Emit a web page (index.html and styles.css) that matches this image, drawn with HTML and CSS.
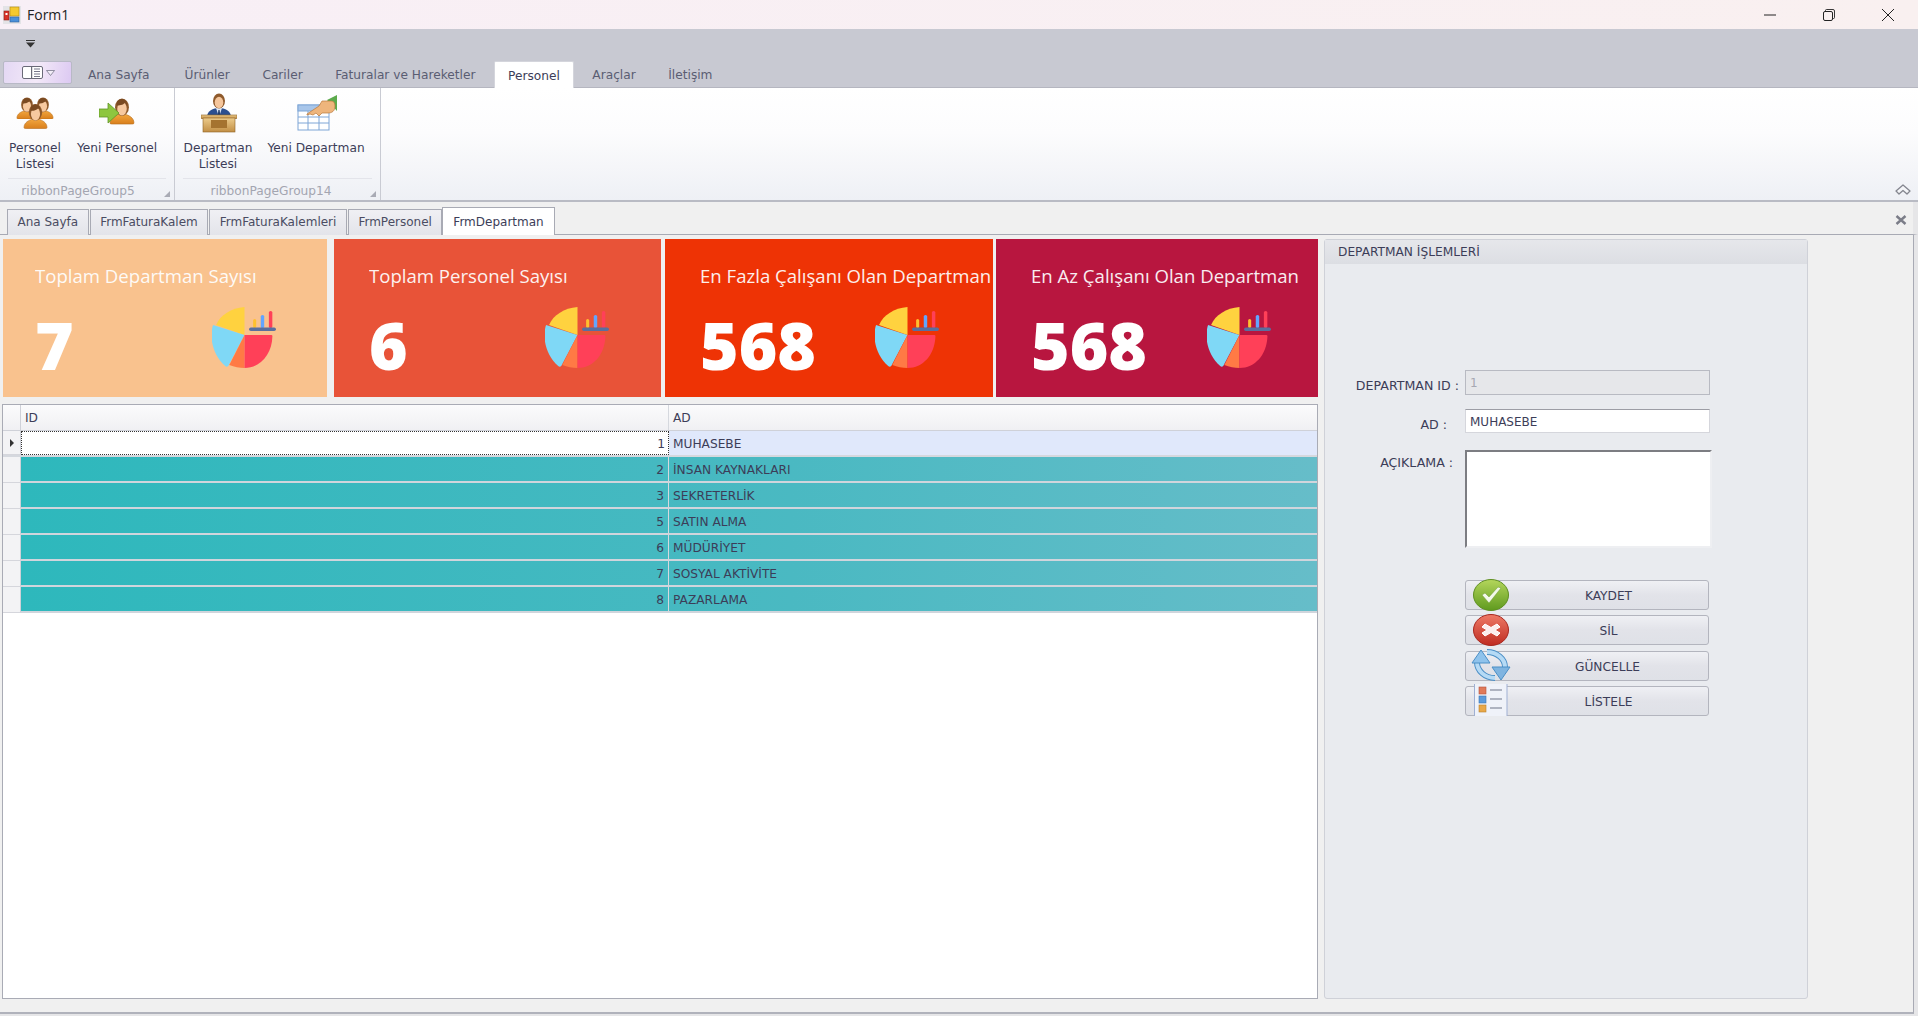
FILE: index.html
```html
<!DOCTYPE html>
<html lang="tr">
<head>
    <meta charset="UTF-8">
    <title>Form1</title>
    <link rel="stylesheet" href="styles.css">
</head>
<body>

<svg class="icon-defs" aria-hidden="true">
    <defs>
        <linearGradient id="shirt" x1="0" y1="0" x2="0" y2="1">
            <stop offset="0" stop-color="#f2a63f"/>
            <stop offset="1" stop-color="#d97f1c"/>
        </linearGradient>
        <linearGradient id="green-ball" x1="0" y1="0" x2="0" y2="1">
            <stop offset="0" stop-color="#b4d65c"/>
            <stop offset="1" stop-color="#5f9a1e"/>
        </linearGradient>
        <linearGradient id="red-ball" x1="0" y1="0" x2="0" y2="1">
            <stop offset="0" stop-color="#ee7a66"/>
            <stop offset="1" stop-color="#bf2c22"/>
        </linearGradient>
        <linearGradient id="wood" x1="0" y1="0" x2="0" y2="1">
            <stop offset="0" stop-color="#eccb8b"/>
            <stop offset="1" stop-color="#c28f45"/>
        </linearGradient>
        <symbol id="person" viewBox="0 0 24 24">
            <path d="M1 23c0-5 5-7 8-8h6c3 1 8 3 8 8 0 1-1 1-2 1H3c-1 0-2 0-2-1z" fill="url(#shirt)" stroke="#b86f1e" stroke-width=".6"/>
            <ellipse cx="12" cy="8.5" rx="6.4" ry="8" fill="#8f5a2c"/>
            <ellipse cx="12" cy="10" rx="4.4" ry="6.2" fill="#f7c9a0"/>
            <path d="M7 7c2 0 6 0 8-3l2 4c0-4-2-7-5-7S7 3 7 7z" fill="#7a4a22"/>
        </symbol>
        <symbol id="pie" viewBox="13 11 64 62" preserveAspectRatio="none">
            <path d="M45 40V12C32 13 21 20 17 30Z" fill="#ffd23f"/>
            <path d="M45 40L14 30C10 43 14 60 26 71c1 1 2 1 3 0Z" fill="#7fd8f6"/>
            <path d="M45 40L30 70c5 2 10 3 15 3Z" fill="#ff7a45"/>
            <path d="M45 40V73C60 73 72 60 72.5 41c0-1-1-1-1-1Z" fill="#ff4058"/>
            <rect x="53.5" y="24" width="3" height="9" rx="1.5" fill="#ffc02e"/>
            <rect x="61" y="20" width="3.4" height="13" rx="1.6" fill="#62a5ff"/>
            <rect x="69" y="16" width="3.4" height="17" rx="1.6" fill="#ff4058"/>
            <rect x="49.5" y="32.4" width="26.5" height="3.6" rx="1.8" fill="#5a6f9e"/>
        </symbol>
    </defs>
</svg>

<header class="titlebar">
    <svg class="app-icon" viewBox="0 0 18 18">
        <rect x="0" y="0" width="18" height="18" fill="#e3e3e6"/>
        <rect x="7" y="1" width="9" height="9" fill="#f4c92e" stroke="#b98f14" stroke-width=".7"/>
        <rect x="1" y="5" width="5" height="9" fill="#d8332b" stroke="#8c1f1a" stroke-width=".6"/>
        <rect x="2.5" y="7" width="2" height="2" fill="#fff"/>
        <rect x="7" y="11" width="9" height="5" fill="#4a90d9" stroke="#2c5f9c" stroke-width=".6"/>
    </svg>
    <span class="titlebar-text">Form1</span>
    <div class="window-buttons">
        <svg viewBox="0 0 12 12"><path d="M0 6h12" stroke="#222" stroke-width="1" fill="none"/></svg>
        <svg viewBox="0 0 12 12"><path d="M2.5 2.5V1.5q0-1 1-1h6.5q1.500 0 1.500 1.500v6.500q0 1-1 1H9.500" stroke="#222" stroke-width=".9" fill="none"/><rect x=".5" y="2.500" width="9" height="9" rx="1.500" stroke="#222" stroke-width="1" fill="none"/></svg>
        <svg viewBox="0 0 12 12"><path d="M0 0l12 12M12 0L0 12" stroke="#222" stroke-width="1" fill="none"/></svg>
    </div>
</header>

<section class="ribbon">
    <div class="quick-access">
        <svg viewBox="0 0 9 8" class="quick-arrow"><path d="M0 0h9v1H0zM0 2.500h9L4.500 7.500z" fill="#333"/></svg>
    </div>
    <nav class="ribbon-tabs">
        <div class="app-button">
            <svg viewBox="0 0 21 13" class="app-button-icon">
                <rect x=".5" y=".5" width="20" height="12" rx="1.500" fill="#fff" stroke="#6a6a78"/>
                <rect x="9" y="1" width="1.200" height="11" fill="#6a6a78"/>
                <path d="M12 3h6M12 5.500h6M12 8h6M12 10.500h6" stroke="#77778a"/>
            </svg>
            <svg viewBox="0 0 9 6" class="app-button-arrow"><path d="M.5.500h8L4.500 5.500z" fill="#f3edf8" stroke="#77778a" stroke-width=".8"/></svg>
        </div>
        <a class="ribbon-tab">Ana Sayfa</a>
        <a class="ribbon-tab">Ürünler</a>
        <a class="ribbon-tab">Cariler</a>
        <a class="ribbon-tab">Faturalar ve Hareketler</a>
        <a class="ribbon-tab active">Personel</a>
        <a class="ribbon-tab">Araçlar</a>
        <a class="ribbon-tab">İletişim</a>
    </nav>
</section>

<section class="ribbon-panel">
    <div class="ribbon-group group-personel">
        <div class="ribbon-items">
            <div class="ribbon-item item-personel-listesi">
                <svg class="ribbon-icon" viewBox="0 0 38 33">
                    <use href="#person" x="0" y="0" width="22" height="22"/>
                    <use href="#person" x="16" y="0" width="22" height="22"/>
                    <use href="#person" x="7" y="5" width="25" height="28"/>
                </svg>
                <span>Personel<br>Listesi</span>
            </div>
            <div class="ribbon-item item-yeni-personel">
                <svg class="ribbon-icon" viewBox="0 0 36 33">
                    <use href="#person" x="10" y="0" width="26" height="28"/>
                    <path d="M0 11h9V5l11 10-11 10v-6H0z" transform="translate(0 1)" fill="#8dc63f" stroke="#5f9526" stroke-width=".8"/>
                </svg>
                <span>Yeni Personel</span>
            </div>
        </div>
        <div class="ribbon-caption">ribbonPageGroup5</div>
        <svg class="launcher" viewBox="0 0 6 6"><path d="M6 0v6H0z" fill="#a9abb5"/></svg>
    </div>
    <div class="ribbon-group group-departman">
        <div class="ribbon-items">
            <div class="ribbon-item item-departman-listesi">
                <svg class="ribbon-icon" viewBox="0 0 36 40">
                    <path d="M6 24c0-6 6-9 12-9s12 3 12 9v2H6z" fill="#2c4f8f"/>
                    <path d="M15 15l3 9 3-9z" fill="#dfe7f3"/>
                    <path d="M17.400 17h1.200l1 8h-3.200z" fill="#25406f"/>
                    <ellipse cx="18" cy="8" rx="6" ry="7.500" fill="#8f5a2c"/>
                    <ellipse cx="18" cy="9.500" rx="4.300" ry="5.800" fill="#f5c69c"/>
                    <rect x="0" y="22" width="36" height="3.500" fill="url(#wood)" stroke="#8e6327" stroke-width=".6"/>
                    <rect x="2" y="25" width="32" height="14" fill="url(#wood)" stroke="#8e6327" stroke-width=".6"/>
                    <rect x="10" y="27" width="16" height="8" fill="#a5732f"/>
                </svg>
                <span>Departman<br>Listesi</span>
            </div>
            <div class="ribbon-item item-yeni-departman">
                <svg class="ribbon-icon" viewBox="0 0 40 36">
                    <path d="M30 5l10-5v16z" fill="#5cab4c"/>
                    <rect x="1" y="10" width="31" height="25" fill="#fff" stroke="#7ea6d6"/>
                    <rect x="1" y="10" width="31" height="6" fill="#a8c6ea" stroke="#7ea6d6"/>
                    <path d="M1 22h31M1 28h31M11 16v19M22 16v19" stroke="#7ea6d6"/>
                    <path d="M10 19l12-8 3-5h9c3 0 4 2 4 5 0 5-3 7-7 7h-6l-3 3-3-3-3 2-3-1-3 1z" fill="#eeb57c" stroke="#b9783b" stroke-width=".7"/>
                </svg>
                <span>Yeni Departman</span>
            </div>
        </div>
        <div class="ribbon-caption">ribbonPageGroup14</div>
        <svg class="launcher" viewBox="0 0 6 6"><path d="M6 0v6H0z" fill="#a9abb5"/></svg>
    </div>
    <svg class="ribbon-collapse" viewBox="0 0 16 12">
        <path d="M1 8l7-6 7 6-3 3-4-3.500L4 11z" fill="#f4f5f8" stroke="#84868f" stroke-width="1.300" stroke-linejoin="round"/>
    </svg>
</section>

<nav class="doc-tabs">
    <a class="doc-tab">Ana Sayfa</a>
    <a class="doc-tab">FrmFaturaKalem</a>
    <a class="doc-tab">FrmFaturaKalemleri</a>
    <a class="doc-tab">FrmPersonel</a>
    <a class="doc-tab active">FrmDepartman</a>
    <svg class="doc-close" viewBox="0 0 12 10"><path d="M1.500 1l9 8M10.500 1l-9 8" stroke="#7b7d88" stroke-width="2.400" fill="none"/></svg>
</nav>

<main class="content">
    <div class="left-column">
        <div class="cards">
            <div class="card card-peach">
                <div class="card-title">Toplam Departman Sayısı</div>
                <div class="card-bottom">
                    <span class="card-number">7</span>
                    <svg class="card-pie"><use href="#pie"/></svg>
                </div>
            </div>
            <div class="card card-coral">
                <div class="card-title">Toplam Personel Sayısı</div>
                <div class="card-bottom">
                    <span class="card-number">6</span>
                    <svg class="card-pie"><use href="#pie"/></svg>
                </div>
            </div>
            <div class="card card-orange">
                <div class="card-title">En Fazla Çalışanı Olan Departman</div>
                <div class="card-bottom">
                    <span class="card-number">568</span>
                    <svg class="card-pie"><use href="#pie"/></svg>
                </div>
            </div>
            <div class="card card-crimson">
                <div class="card-title">En Az Çalışanı Olan Departman</div>
                <div class="card-bottom">
                    <span class="card-number">568</span>
                    <svg class="card-pie"><use href="#pie"/></svg>
                </div>
            </div>
        </div>

        <div class="grid">
            <div class="grid-row grid-head">
                <div class="grid-indicator"></div>
                <div class="grid-cell">ID</div>
                <div class="grid-cell">AD</div>
            </div>
            <div class="grid-row grid-selected">
                <div class="grid-indicator"><svg viewBox="0 0 4 8"><path d="M0 0l4 4-4 4z" fill="#333"/></svg></div>
                <div class="grid-cell cell-id cell-focus">1</div>
                <div class="grid-cell">MUHASEBE</div>
            </div>
            <div class="grid-row grid-teal">
                <div class="grid-indicator"></div>
                <div class="grid-cell cell-id">2</div>
                <div class="grid-cell">İNSAN KAYNAKLARI</div>
            </div>
            <div class="grid-row grid-teal">
                <div class="grid-indicator"></div>
                <div class="grid-cell cell-id">3</div>
                <div class="grid-cell">SEKRETERLİK</div>
            </div>
            <div class="grid-row grid-teal">
                <div class="grid-indicator"></div>
                <div class="grid-cell cell-id">5</div>
                <div class="grid-cell">SATIN ALMA</div>
            </div>
            <div class="grid-row grid-teal">
                <div class="grid-indicator"></div>
                <div class="grid-cell cell-id">6</div>
                <div class="grid-cell">MÜDÜRİYET</div>
            </div>
            <div class="grid-row grid-teal">
                <div class="grid-indicator"></div>
                <div class="grid-cell cell-id">7</div>
                <div class="grid-cell">SOSYAL AKTİVİTE</div>
            </div>
            <div class="grid-row grid-teal">
                <div class="grid-indicator"></div>
                <div class="grid-cell cell-id">8</div>
                <div class="grid-cell">PAZARLAMA</div>
            </div>
        </div>
    </div>

    <aside class="panel">
        <div class="panel-header">DEPARTMAN İŞLEMLERİ</div>
        <div class="panel-form">
            <label class="form-label label-id">DEPARTMAN ID :</label>
            <div class="form-input input-disabled">1</div>
            <label class="form-label label-ad">AD :</label>
            <div class="form-input input-ad">MUHASEBE</div>
            <label class="form-label label-desc">AÇIKLAMA :</label>
            <div class="form-textarea"></div>
        </div>
        <div class="panel-buttons">
            <div class="button">
                <svg class="button-icon" viewBox="0 0 36 32">
                    <ellipse cx="18" cy="16" rx="17.500" ry="15.500" fill="url(#green-ball)" stroke="#5f8f22"/>
                    <path d="M9 16l7 8 12-15-3-1-9 10-4-4z" fill="#f3f8ea" stroke="#6f9a34" stroke-width=".5"/>
                </svg>
                <span class="button-text">KAYDET</span>
            </div>
            <div class="button">
                <svg class="button-icon" viewBox="0 0 36 32">
                    <ellipse cx="18" cy="16" rx="17.500" ry="15.500" fill="url(#red-ball)" stroke="#a8281f"/>
                    <path d="M12 10l6 3.500L24 10l3 3-5 3 5 3-3 3-6-3.500L12 22l-3-3 5-3-5-3z" fill="#fbeeee" stroke="#fff" stroke-width="1" stroke-linejoin="round"/>
                </svg>
                <span class="button-text">SİL</span>
            </div>
            <div class="button">
                <svg class="button-icon icon-refresh" viewBox="0 0 40 32">
                    <path d="M6 13C6 22 14 29 24 29M34 18C34 10 26 3 16 3" fill="none" stroke="#4b8fc6" stroke-width="6"/>
                    <path d="M6 13C6 22 14 29 24 29M34 18C34 10 26 3 16 3" fill="none" stroke="#b5daf5" stroke-width="4"/>
                    <path d="M10 1L1 14h18z" fill="#8fc3ec" stroke="#4b8fc6"/>
                    <path d="M30 31l9-13H21z" fill="#7fb4e0" stroke="#4b8fc6"/>
                </svg>
                <span class="button-text">GÜNCELLE</span>
            </div>
            <div class="button">
                <svg class="button-icon" viewBox="0 0 36 32">
                    <rect x="1" y="0" width="33" height="32" fill="#eff2f9"/>
                    <path d="M1.500 0v32M34 0v32" stroke="#9fb0d3"/>
                    <rect x="6" y="3" width="7" height="7" fill="#e07a5a" stroke="#b5523a" stroke-width=".6"/>
                    <rect x="6" y="12" width="7" height="7" fill="#5b9bdc" stroke="#3b76b3" stroke-width=".6"/>
                    <rect x="6" y="21" width="7" height="7" fill="#e8a848" stroke="#b9812d" stroke-width=".6"/>
                    <path d="M17 6h12M17 15h12M17 24h12" stroke="#6f7488" stroke-width="1.100"/>
                </svg>
                <span class="button-text">LİSTELE</span>
            </div>
        </div>
    </aside>
</main>

</body>
</html>
```

FILE: styles.css
```css
* {
    box-sizing: border-box;
}

body {
    margin: 0;
    width: 1918px;
    height: 1016px;
    overflow: hidden;
    display: flex;
    flex-direction: column;
    background-color: #e6e6e8;
    font-family: "DejaVu Sans", sans-serif;
    font-size: 12.2px;
    color: #3c3d58;
}

.icon-defs {
    position: absolute;
    width: 0;
    height: 0;
}

/* Title bar */
.titlebar {
    height: 29px;
    flex: none;
    display: flex;
    align-items: center;
    padding-left: 3px;
    background: linear-gradient(90deg, #f8eff6, #f9f0f0);
}

.app-icon {
    width: 18px;
    height: 18px;
}

.titlebar-text {
    margin-left: 6px;
    font-family: "Open Sans", sans-serif;
    font-size: 14px;
    color: #222;
}

.window-buttons {
    margin-left: auto;
    display: flex;
    gap: 47px;
    padding-right: 24px;
}

.window-buttons svg {
    width: 12px;
    height: 12px;
}

/* Ribbon */
.ribbon {
    height: 59px;
    flex: none;
    display: flex;
    flex-direction: column;
    background-color: #c8c9d2;
    border-bottom: 1px solid #b5b6c0;
}

.quick-access {
    height: 32px;
    padding: 11px 0 0 26px;
}

.quick-arrow {
    display: block;
    width: 9px;
    height: 8px;
}

.ribbon-tabs {
    display: flex;
    align-items: flex-end;
    gap: 8.5px;
    height: 27px;
    padding-left: 3px;
}

.app-button {
    width: 69px;
    height: 23px;
    margin: 0 -4.5px 3px 0;
    display: flex;
    align-items: center;
    justify-content: center;
    gap: 3px;
    background: linear-gradient(100deg, #e4d8f4, #f3e9f8 50%, #dcc9f2);
    border: 1px solid #b8b9c6;
    border-radius: 2px;
}

.app-button-icon {
    width: 21px;
    height: 13px;
    margin-left: 2px;
}

.app-button-arrow {
    width: 9px;
    height: 6px;
}

.ribbon-tab {
    padding: 0 12px;
    height: 26px;
    line-height: 29px;
    color: #5a5d72;
}

.ribbon-tab:first-of-type {
    margin-right: 2.5px;
}

.ribbon-tab.active {
    height: 27px;
    background-color: #fff;
    border: 1px solid #d4d5dc;
    border-bottom: 0;
    border-radius: 2px 2px 0 0;
    padding: 0 13px;
    margin: 0 -2px -1px;
    color: #3c3d58;
}

.ribbon-panel {
    height: 114px;
    flex: none;
    display: flex;
    position: relative;
    background: linear-gradient(#fff, #fcfcfd 40%, #eef0f5);
    border-bottom: 2px solid #b9bbc4;
}

.ribbon-group {
    position: relative;
    display: flex;
    flex-direction: column;
    border-right: 1px solid #c9cbd3;
}

.group-personel {
    width: 175px;
}

.group-departman {
    width: 206px;
}

.ribbon-items {
    height: 90px;
    position: relative;
    display: flex;
}

.ribbon-item {
    display: flex;
    flex-direction: column;
    align-items: center;
    text-align: center;
    line-height: 16px;
    white-space: nowrap;
}

.ribbon-item span {
    position: absolute;
    top: 52px;
}

.ribbon-icon {
    display: block;
}

.item-personel-listesi {
    width: 70px;
    padding-top: 9px;
}

.item-personel-listesi .ribbon-icon {
    width: 38px;
    height: 33px;
}

.item-yeni-personel {
    width: 88px;
    margin-left: 3px;
    padding-top: 9px;
}

.item-yeni-personel .ribbon-icon {
    width: 36px;
    height: 33px;
}

.item-departman-listesi {
    width: 86px;
    padding-top: 5px;
}

.item-departman-listesi .ribbon-icon {
    width: 36px;
    height: 40px;
    margin-left: 2px;
}

.item-yeni-departman {
    width: 102px;
    margin-left: 4px;
    padding-top: 7px;
}

.item-yeni-departman .ribbon-icon {
    width: 40px;
    height: 36px;
    margin-left: 2px;
}

.ribbon-caption {
    margin: 0 8px;
    height: 22px;
    line-height: 25px;
    border-top: 1px solid #e3e4ea;
    text-align: center;
    color: #a3a5b1;
}

.group-personel .ribbon-caption {
    padding-right: 18px;
}

.group-departman .ribbon-caption {
    padding-right: 13px;
}

.launcher {
    position: absolute;
    right: 4px;
    bottom: 3px;
    width: 6px;
    height: 6px;
}

.ribbon-collapse {
    position: absolute;
    right: 7px;
    bottom: 5px;
    width: 16px;
    height: 12px;
}

/* Document tabs */
.doc-tabs {
    height: 33px;
    flex: none;
    display: flex;
    align-items: flex-end;
    gap: 1px;
    padding: 0 5px 0 7px;
    position: relative;
    background-color: #f0f0f0;
    border-bottom: 1px solid #a8aab4;
    border-right: 5px solid #e6e6e8;
    font-size: 12px;
}

.doc-tab {
    height: 26px;
    line-height: 25px;
    padding: 0 9.5px;
    margin-bottom: -1px;
    background: linear-gradient(#f0f0f4, #e3e4ea);
    border: 1px solid #a8aab4;
    border-bottom: 0;
    color: #4a4c62;
    white-space: nowrap;
}

.doc-tab.active {
    height: 28px;
    margin-left: -1px;
    background: #fff;
    line-height: 29px;
    padding: 0 10px;
    color: #3c3d58;
}

.doc-close {
    position: absolute;
    right: 6px;
    top: 13px;
    width: 12px;
    height: 10px;
}

/* Content */
.content {
    flex: none;
    height: 779px;
    width: 1914px;
    display: flex;
    padding: 4px 0 13px 2px;
    background-color: #f0f0f0;
    border-right: 1px solid #a8aab4;
    border-bottom: 2px solid #b0b2bb;
}

.left-column {
    width: 1316px;
    display: flex;
    flex-direction: column;
    gap: 7px;
}

.cards {
    display: flex;
    height: 158px;
    flex: none;
    margin-left: 1px;
}

.card {
    display: flex;
    flex-direction: column;
    padding-top: 24px;
    color: #fff;
    font-family: "Open Sans", sans-serif;
}

.card-title {
    font-size: 18.6px;
    line-height: 26px;
    white-space: nowrap;
    opacity: 0.92;
}

.card-bottom {
    display: flex;
    align-items: flex-start;
    justify-content: space-between;
    margin-top: 17px;
}

.card-number {
    font-size: 66px;
    font-weight: 800;
    line-height: 62px;
    margin-top: 7px;
}

.card-pie {
    width: 65px;
    height: 62px;
}

.card-peach {
    width: 324px;
    padding-left: 32px;
    padding-right: 50px;
    background-color: #f9c28e;
}

.card-coral {
    width: 327px;
    margin-left: 7px;
    padding-left: 35px;
    padding-right: 51px;
    background-color: #e85338;
}

.card-orange {
    width: 328px;
    margin-left: 4px;
    padding-left: 35px;
    padding-right: 53px;
    background-color: #ee3305;
}

.card-crimson {
    width: 322px;
    margin-left: 3px;
    padding-left: 35px;
    padding-right: 46px;
    background-color: #b8163f;
}

/* Grid */
.grid {
    flex: 1;
    background-color: #fff;
    border: 1px solid #a9abb5;
}

.grid-row {
    display: grid;
    grid-template-columns: 18px 648px 1fr;
    height: 26px;
}

.grid-head {
    background: linear-gradient(#fbfbfc, #f0f0f3);
    border-bottom: 1px solid #cfd1d8;
}

.grid-indicator {
    display: flex;
    align-items: center;
    justify-content: center;
    background-color: #f3f3f5;
    border-right: 1px solid #cfd1d8;
    border-bottom: 1px solid #d5d6dc;
}

.grid-head .grid-indicator {
    background: none;
    border-bottom: 0;
}

.grid-indicator svg {
    width: 4px;
    height: 8px;
}

.grid-cell {
    display: flex;
    align-items: center;
    padding: 1px 4px 0;
    border-right: 1px solid #d5d8de;
    white-space: nowrap;
}

.grid-cell:last-child {
    border-right: 0;
}

.cell-id {
    justify-content: flex-end;
}

.grid-selected {
    background-color: #e0e8fb;
    border-bottom: 2px solid #d5d8de;
}

.grid-selected .cell-id {
    background-color: #fff;
}

.cell-focus {
    border: 1px dotted #333;
    padding-right: 3px;
}

.grid-teal {
    background: linear-gradient(90deg, #2db8bc, #4ab9c2 60%, #66bdc9);
    border-bottom: 2px solid #d0d5dc;
}

.grid-teal .grid-indicator {
    margin-bottom: -2px;
}

/* Panel */
.panel {
    width: 484px;
    margin-left: 6px;
    background-color: #e9ebef;
    border: 1px solid #cfd1d8;
    border-radius: 3px;
}

.panel-header {
    height: 24px;
    line-height: 24px;
    padding-left: 13px;
    background: linear-gradient(#e6e7eb, #dcdee3);
}

.panel-form {
    display: grid;
    grid-template-columns: 140px 245px;
    grid-template-rows: 25px 24px 101px;
    row-gap: 14px;
    padding-top: 106px;
}

.form-label {
    font-size: 12.6px;
    text-align: right;
    white-space: nowrap;
}

.label-id {
    padding: 8px 6px 0 0;
}

.label-ad {
    padding: 8px 18px 0 0;
}

.label-desc {
    padding: 8px 12px 0 0;
}

.form-input {
    padding: 0 4px;
    font-size: 12px;
    border: 1px solid #d5d6dc;
}

.input-disabled {
    line-height: 25px;
    background-color: #e6e7ea;
    border-color: #b8bac2;
    color: #a6a8b2;
}

.input-ad {
    line-height: 24px;
    background-color: #fff;
    border-top-color: #9c9da5;
}

.form-textarea {
    width: 247px;
    margin-top: 3px;
    background-color: #fff;
    border: 2px solid #eeeff2;
    border-top-color: #7c7d82;
    border-left-color: #7c7d82;
}

.panel-buttons {
    display: flex;
    flex-direction: column;
    gap: 5.33px;
    width: 244px;
    margin: 32px 0 0 140px;
}

.button {
    height: 30px;
    display: flex;
    align-items: center;
    padding-left: 7px;
    background: linear-gradient(#eff0f4, #e2e3e9 50%, #dfe1e7);
    border: 1px solid #b3b5be;
    border-radius: 3px;
}

.button-icon {
    flex: none;
    width: 36px;
    height: 32px;
    margin-top: -1px;
    overflow: visible;
}

.icon-refresh {
    width: 40px;
    margin: -1px -4px 0 -2px;
}

.button-text {
    flex: 1;
    padding-top: 2px;
    text-align: center;
}
```
